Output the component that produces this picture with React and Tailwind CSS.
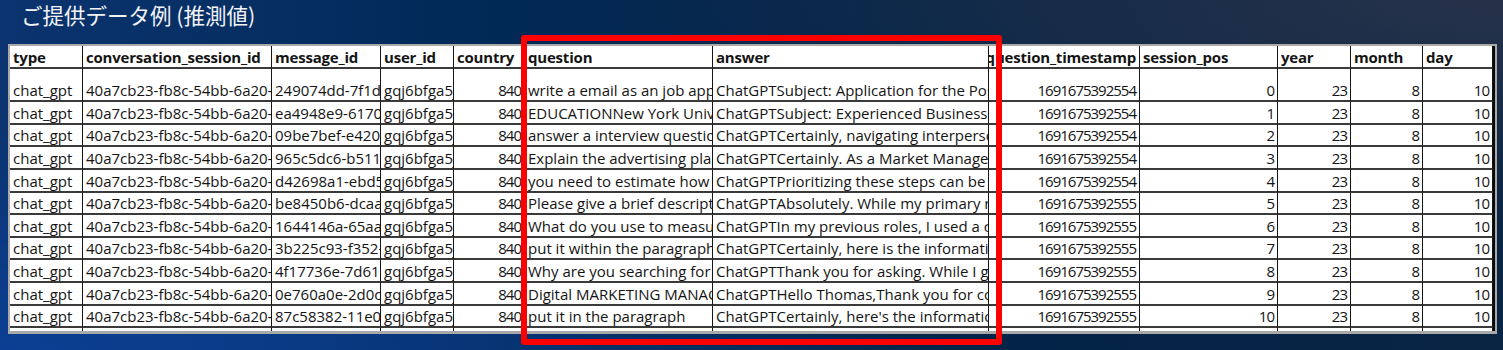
import React from "react";

const cols = [
  { w: 73, align: "left" },
  { w: 189, align: "left" },
  { w: 109, align: "left" },
  { w: 73, align: "left" },
  { w: 71, align: "right" },
  { w: 188, align: "left" },
  { w: 276, align: "left" },
  { w: 151, align: "right" },
  { w: 138, align: "right" },
  { w: 73, align: "right" },
  { w: 72, align: "right" },
  { w: 70, align: "right" },
];

const headers = [
  "type",
  "conversation_session_id",
  "message_id",
  "user_id",
  "country",
  "question",
  "answer",
  "question_timestamp",
  "session_pos",
  "year",
  "month",
  "day",
];

const msgIds = [
  "249074dd-7f1d-4c2a-9b1e",
  "ea4948e9-6170-4b3d-8a2f",
  "09be7bef-e420-4f1a-b6c3",
  "965c5dc6-b511-4e8d-a7f0",
  "d42698a1-ebd5-4a6c-9d12",
  "be8450b6-dcaa-4f7e-8b34",
  "1644146a-65aa-4c9d-a1e5",
  "3b225c93-f352-4d0b-b8a6",
  "4f17736e-7d61-4e2c-9f07",
  "0e760a0e-2d0c-4b5a-8c18",
  "87c58382-11e0-4a3f-b2d9",
];

const questions = [
  "write a email as an job application",
  "EDUCATIONNew York University",
  "answer a interview question",
  "Explain the advertising plan",
  "you need to estimate how long",
  "Please give a brief description",
  "What do you use to measure",
  "put it within the paragraph",
  "Why are you searching for a",
  "Digital MARKETING MANAGER",
  "put it in the paragraph",
];

const answers = [
  "ChatGPTSubject: Application for the Position",
  "ChatGPTSubject: Experienced Business Manager",
  "ChatGPTCertainly, navigating interpersonal",
  "ChatGPTCertainly. As a Market Manager, I",
  "ChatGPTPrioritizing these steps can be done",
  "ChatGPTAbsolutely. While my primary role",
  "ChatGPTIn my previous roles, I used a combination",
  "ChatGPTCertainly, here is the information",
  "ChatGPTThank you for asking. While I gained",
  "ChatGPTHello Thomas,Thank you for considering",
  "ChatGPTCertainly, here's the information",
];

const rows = msgIds.map((m, i) => [
  "chat_gpt",
  "40a7cb23-fb8c-54bb-6a20-c3f1e8d2a9b7",
  m,
  "gqj6bfga5jk2",
  "840",
  questions[i],
  answers[i],
  i < 5 ? "1691675392554" : "1691675392555",
  String(i),
  "23",
  "8",
  "10",
]);

const rowHeights = [33, 23, 22, 23, 23, 22, 23, 22, 23, 23, 22];

function Cell({ children, col, bold, h, header, alignEnd }) {
  const numeric = col.align === "right" && !header;
  return (
    <div
      className={
        "shrink-0 overflow-hidden whitespace-nowrap border-r border-r-[#151515] border-b-2 border-b-[#3a3a3a] flex px-[3px] " +
        (header ? "items-center pt-[1px] tracking-[-0.2px] " : "items-end ") +
        (numeric ? "justify-end tracking-[-1px] " : alignEnd ? "justify-end " : "justify-start ") +
        (bold ? "font-bold" : "font-normal")
      }
      style={{ width: col.w, height: h }}
    >
      <span className="leading-[19px] shrink-0">{children}</span>
    </div>
  );
}

export default function App() {
  return (
    <div className="relative w-[1503px] h-[350px] overflow-hidden bg-[radial-gradient(ellipse_at_top_right,#26324a_0%,rgba(20,35,60,0)_45%),radial-gradient(ellipse_at_bottom_left,#0c3f93_0%,rgba(12,63,147,0)_45%),linear-gradient(90deg,#0b3470_0%,#022a58_30%,#012449_60%,#0a2443_100%)]">
      <div className="pl-[21px] h-[44px] text-[21.5px] leading-[30px] text-[#f2f4f8] font-['Noto_Sans_CJK_JP',sans-serif]">
        ご提供データ例 (推測値)
      </div>
      <div className="ml-[8px] w-[1489px] border-2 border-[#a9a9a9] border-b-[3px] bg-white">
        <div className="border-r-2 border-r-[#0a0a0a] text-[15px] text-[#141414] font-['Open_Sans',sans-serif]">
          <div className="flex">
            {headers.map((t, i) => (
              <Cell key={i} col={cols[i]} bold header h={23} alignEnd={i === 7}>
                {t}
              </Cell>
            ))}
          </div>
          {rows.map((r, ri) => (
            <div className="flex" key={ri}>
              {r.map((t, ci) => (
                <Cell key={ci} col={cols[ci]} h={rowHeights[ri]}>
                  {t}
                </Cell>
              ))}
            </div>
          ))}
          <div className="flex h-[3px] overflow-hidden">
            {cols.map((c, i) => (
              <div
                key={i}
                className="shrink-0 h-[3px] border-r border-r-[#151515]"
                style={{ width: c.w }}
              />
            ))}
          </div>
        </div>
      </div>
      <div className="absolute left-[521px] top-[35px] w-[481px] h-[310px] border-[6px] border-[#ff0000] rounded-[3px]" />
    </div>
  );
}
